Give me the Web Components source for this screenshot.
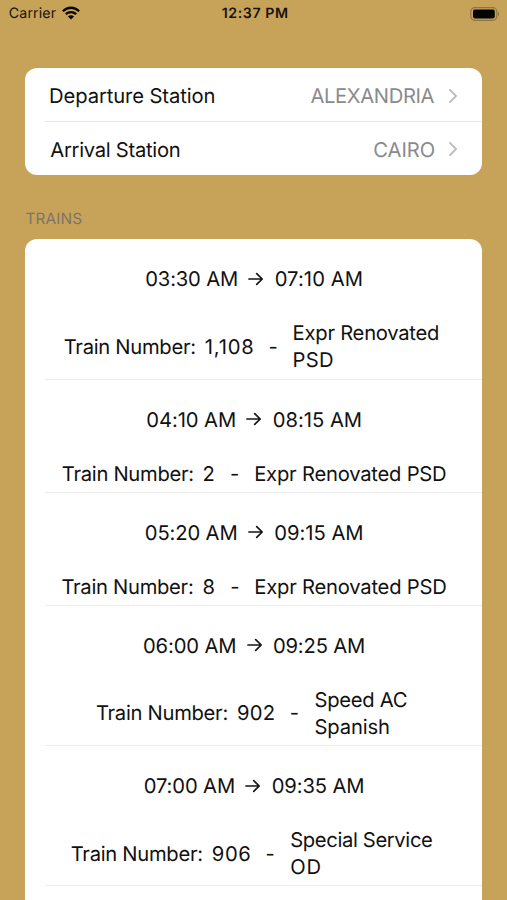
<!DOCTYPE html>
<html lang="en">
<head>
<meta charset="utf-8">
<title>Trains</title>
<style>
html, body { margin: 0; height: 900px; overflow: hidden; background: #c7a35a; }
body { font-family: Inter, "Liberation Sans", sans-serif; color: #111; }
</style>
</head>
<body>
<train-app></train-app>
<script>
const define = (name, html, setup) => {
  const template = document.createElement('template');
  template.innerHTML = html;
  customElements.define(name, class extends HTMLElement {
    connectedCallback() {
      if (this.shadowRoot) return;
      this.attachShadow({ mode: 'open' }).append(template.content.cloneNode(true));
      if (setup) setup(this, this.shadowRoot);
    }
  });
};

// One line of text whose tracking is adjusted to a given visible width.
// Measured at 20 times its size, since glyph bounds are rounded to whole pixels.
const pen = document.createElement('canvas').getContext('2d');
define('fit-text', `
<style>
:host { display: block; flex: none; text-rendering: geometricPrecision; }
span { display: block; white-space: nowrap; }
</style><span></span>`, (el, root) => {
  const span = root.querySelector('span');
  const text = el.getAttribute('text');
  const width = +el.getAttribute('w');
  span.textContent = text;
  const cs = getComputedStyle(el);
  pen.font = `${cs.fontWeight} ${parseFloat(cs.fontSize) * 20}px ${cs.fontFamily}`;
  const m = pen.measureText(text);
  const left = m.actualBoundingBoxLeft / 20;
  const ink = m.actualBoundingBoxRight / 20 + left;
  el.style.width = width + 'px';
  if (text.length > 1) span.style.letterSpacing = (width - ink) / (text.length - 1) + 'px';
  span.style.marginLeft = left + 'px';
});

define('status-bar', `
<style>
:host { display: grid; grid-template-columns: 1fr auto 1fr; height: 28px; padding: 0 7px 0 9.5px; align-items: center; font-size: 14.2px; line-height: 28px; box-sizing: border-box; color: #17120a; }
.left { display: flex; align-items: center; gap: 6px; }
.time { font-weight: 600; }
.right { justify-self: end; display: flex; margin-bottom: 1px; }
.left svg { margin-bottom: 2px; }
svg { display: block; }
</style>
<div class="left"><fit-text text="Carrier" w="46.3"></fit-text>
<svg width="18" height="14" viewBox="0 0 18 14"><g fill="none" stroke="#080704" stroke-width="2.3"><path d="M.9 5.2C5.5.6 12.5.6 17.1 5.2"/><path d="M3.8 8.2C6.8 5.3 11.2 5.3 14.2 8.2"/></g><path d="M5.9 10.4C7.8 8.7 10.2 8.7 12.1 10.4L9 13.5Z" fill="#080704"/></svg></div>
<fit-text class="time" text="12:37 PM" w="65"></fit-text>
<div class="right"><svg width="30" height="14" viewBox="0 0 30 14"><rect x=".8" y=".7" width="26" height="12.6" rx="4" fill="none" stroke="#8d7440" stroke-width="1.2"/><rect x="3" y="2.6" width="21.8" height="8.8" rx="1.8" fill="#050402"/><path d="M28 4.6Q30.3 7 28 9.4Z" fill="#8d7440"/></svg></div>
`);

define('list-card', `
<style>
:host { display: block; margin: 0 24.6px 0 25.4px; background: #fff; border-radius: 12px; overflow: hidden; font-size: 20.2px; line-height: 27px; }
</style><slot></slot>`);

define('station-row', `
<style>
:host { display: block; height: 53.5px; box-sizing: border-box; }
.row { display: flex; align-items: center; height: 100%; padding: 1px 25.5px 0 25.2px; box-sizing: border-box; }
.value { margin-left: auto; color: #8a8a8c; }
svg { margin-left: 14.7px; display: block; }
:host([divided]) { background: linear-gradient(#e6e6e8, #e6e6e8) 19.5px 100% / 100% 1px no-repeat; }
</style>
<div class="row"></div>`, (el, root) => {
  const parts = ['label', 'value'].map(part => {
    const [text, w] = el.getAttribute(part).split('|');
    return `<fit-text class="${part}" text="${text}" w="${w}"></fit-text>`;
  });
  root.querySelector('.row').innerHTML = parts.join('') +
    '<svg width="8" height="14" viewBox="0 0 8 14"><path d="M1 .9L7 7L1 13.1" fill="none" stroke="#bdbdbf" stroke-width="1.9" stroke-linecap="round" stroke-linejoin="round"/></svg>';
});

define('train-row', `
<style>
:host { display: flex; flex-direction: column; gap: 27px; padding: 26px 0 6.2px; background: linear-gradient(#ececee, #ececee) 19.5px 100% / 100% 1px no-repeat; }
.times { display: flex; justify-content: center; align-items: center; gap: 11.7px; }
.detail { display: flex; align-items: center; }
.number { margin-left: 11px; }
.dash { margin-left: 17px; }
.service { margin-left: 17px; }
svg { display: block; flex: none; }
</style>
<div class="times"></div><div class="detail"></div>`, (el, root) => {
  const run = (spec, cls = '') => {
    const [text, w] = spec.split('|');
    return `<fit-text class="${cls}" text="${text}" w="${w}"></fit-text>`;
  };
  const arrow = `<svg width="15.5" height="14" viewBox="0 0 15.5 14"><path d="M1 7H14.2M8.7 1.7L14.2 7L8.7 12.3" fill="none" stroke="#151515" stroke-width="1.7" stroke-linecap="round" stroke-linejoin="round"/></svg>`;
  root.querySelector('.times').innerHTML = run(el.getAttribute('from')) + arrow + run(el.getAttribute('to'));
  const detail = root.querySelector('.detail');
  detail.style.paddingLeft = el.getAttribute('indent') + 'px';
  detail.innerHTML = run('Train Number:|130') + run(el.getAttribute('number'), 'number') + run('-|7.5', 'dash') +
    `<div class="service">${el.getAttribute('service').split('/').map(s => run(s)).join('')}</div>`;
});

define('train-app', `
<style>
:host { display: block; width: 507px; height: 900px; overflow: hidden; }
.stations { margin-top: 40.3px; }
.heading { font-size: 15.4px; line-height: 20px; color: #7d7467; margin: 33.5px 0 10.2px 26.3px; }
.trains { min-height: 700px; padding-top: .4px; }
</style>
<status-bar></status-bar>
<list-card class="stations">
  <station-row divided label="Departure Station|163.5" value="ALEXANDRIA|123.5"></station-row>
  <station-row label="Arrival Station|128.7" value="CAIRO|60"></station-row>
</list-card>
<fit-text class="heading" text="TRAINS" w="55"></fit-text>
<list-card class="trains">
  <train-row from="03:30 AM|90.5" to="07:10 AM|86" indent="39.3" number="1,108|47" service="Expr Renovated|144/PSD|38.5"></train-row>
  <train-row from="04:10 AM|87.5" to="08:15 AM|87" indent="37.4" number="2|10.5" service="Expr Renovated PSD|190"></train-row>
  <train-row from="05:20 AM|90.5" to="09:15 AM|87" indent="37" number="8|11" service="Expr Renovated PSD|190"></train-row>
  <train-row from="06:00 AM|91" to="09:25 AM|90" indent="71.5" number="902|36" service="Speed AC|91.3/Spanish|73"></train-row>
  <train-row from="07:00 AM|89" to="09:35 AM|90.5" indent="46.3" number="906|37" service="Special Service|141/OD|29"></train-row>
</list-card>
`);
</script>
</body>
</html>
